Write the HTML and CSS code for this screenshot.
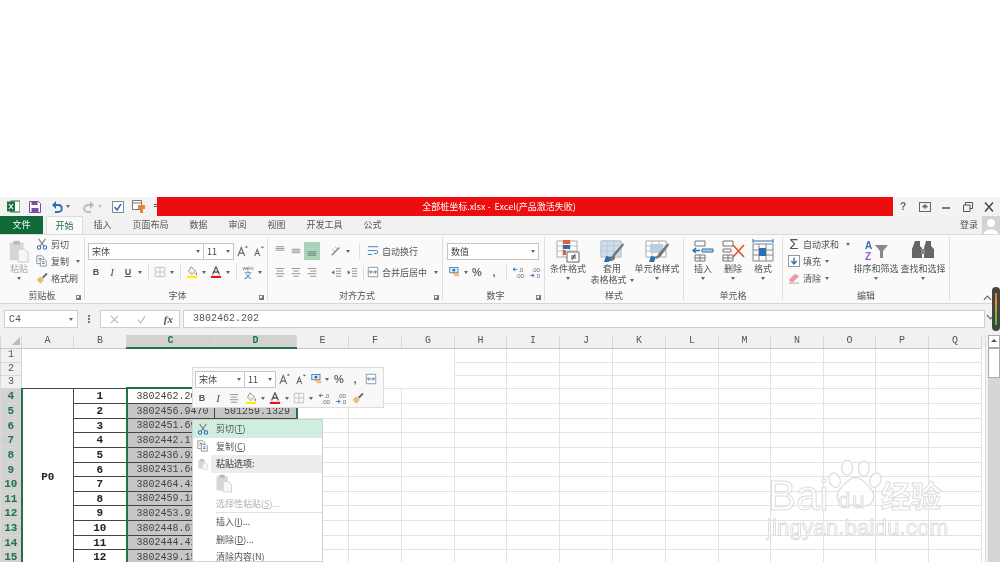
FILE: index.html
```html
<!DOCTYPE html>
<html lang="zh-CN">

<head>
    <meta charset="UTF-8">
    <title>全部桩坐标.xlsx - Excel</title>
    <link rel="stylesheet" href="styles.css">
</head>

<body>
    <svg class="sprite" xmlns="http://www.w3.org/2000/svg">
        <symbol id="fill" viewBox="0 0 14 14"><path d="M6 1l5 5-4 4-4-4z" fill="#fff" stroke="#777"/><path d="M3.500 6.500h7l-3.500 3.500z" fill="#e8d9a8"/><path d="M12 7c1 2 1.500 3 0 3.500-1.500-.5-1-1.500 0-3.500z" fill="#777"/><rect x="1" y="11.500" width="12" height="2.500" fill="#ffee00"/></symbol>
        <symbol id="fontcolor" viewBox="0 0 14 14"><path d="M3 10L7 1l4 9M4.500 7h5" fill="none" stroke="#555" stroke-width="1.500"/><rect x="1" y="11.500" width="12" height="2.500" fill="#e81010"/></symbol>
        <symbol id="grow" viewBox="0 0 14 14"><path d="M1 13L5 3l4 10M2.700 9.500h4.600" fill="none" stroke="#666" stroke-width="1.300"/><path d="M9 3l2-2 2 2z" fill="#2a6fb0"/></symbol>
        <symbol id="shrink" viewBox="0 0 14 14"><path d="M2 13l3-8 3 8M3.200 10h3.600" fill="none" stroke="#666" stroke-width="1.200"/><path d="M9 2l2 2 2-2z" fill="#2a6fb0"/></symbol>
        <symbol id="border" viewBox="0 0 14 14"><path d="M1.500 1.500h11v11h-11zM7 1.500v11M1.500 7h11" fill="none" stroke="#bbb"/></symbol>
        <symbol id="money" viewBox="0 0 16 14"><rect x="1" y="1" width="11" height="7" fill="#dcebf6" stroke="#2a6fb0"/><circle cx="6.500" cy="4.500" r="1.800" fill="#2a6fb0"/><rect x="5" y="8" width="8" height="2" fill="#f0b35a"/><rect x="7" y="10.500" width="7" height="2" fill="#f0b35a"/></symbol>
        <symbol id="decup" viewBox="0 0 14 14"><path d="M0 4h5M2.500 2L0 4l2.500 2" fill="none" stroke="#2a6fb0"/><text x="6" y="6.500" font-size="7" font-family="Liberation Sans" fill="#666">.0</text><text x="3" y="13.500" font-size="7" font-family="Liberation Sans" fill="#666">.00</text></symbol>
        <symbol id="decdown" viewBox="0 0 14 14"><text x="3" y="6.500" font-size="7" font-family="Liberation Sans" fill="#666">.00</text><text x="7" y="13.500" font-size="7" font-family="Liberation Sans" fill="#666">.0</text><path d="M1 11h5M3.500 9L6 11l-2.500 2" fill="none" stroke="#2a6fb0"/></symbol>
        <symbol id="brush" viewBox="0 0 14 14"><path d="M1 9l4-4 4 4-3 4c-2 0-4-2-5-4z" fill="#e3bd78"/><path d="M7 6l5-5 1.500 1.500-5 5z" fill="#666"/></symbol>
        <symbol id="cut" viewBox="0 0 14 14"><path d="M3 1l6 8M11 1L5 9" stroke="#777" stroke-width="1.200" fill="none"/><circle cx="3.500" cy="11" r="2" fill="none" stroke="#2a6fb0" stroke-width="1.200"/><circle cx="10.500" cy="11" r="2" fill="none" stroke="#2a6fb0" stroke-width="1.200"/></symbol>
        <symbol id="copy" viewBox="0 0 14 14"><path d="M1 1h6l2 2v7H1z" fill="#fff" stroke="#888"/><path d="M5 5h5l2 2v6H5z" fill="#fff" stroke="#888"/><path d="M3 4h3M3 6h1M7 8h3M7 10h3" stroke="#2a6fb0"/></symbol>
        <symbol id="paste" viewBox="0 0 24 26"><path d="M2 4h15v19H2z" fill="#d9d5d5"/><path d="M6 2h7v4H6z" fill="#bdb8b8"/><path d="M11 11h7l4 4v10H11z" fill="#f6f6f6" stroke="#c9c9c9"/></symbol>
        <symbol id="lines" viewBox="0 0 14 14"><path d="M2 3h10M3.500 6h7M2 9h10M3.500 12h7" stroke="#888"/></symbol>
        <symbol id="table" viewBox="0 0 24 22"><path d="M1 1h20v16H1z" fill="#fff" stroke="#aaa"/><path d="M1 6h20M1 11h20M7 1v16M14 1v16" stroke="#bbb"/></symbol>
    </svg>

    <div class="app">
        <div class="blank"></div>

        <div class="titlebar">
            <div class="qat">
                <svg class="qat-xl" viewBox="0 0 13 13"><rect x="4" y="1" width="9" height="11" fill="#fff" stroke="#1e7145"/><path d="M0 1.500h8v10H0z" fill="#1e7145"/><path d="M2 4l4 5M6 4L2 9" stroke="#fff" stroke-width="1.100"/></svg>
                <svg class="qat-save" viewBox="0 0 12 12"><path d="M.5.500h9l2 2v9H.5z" fill="#fff" stroke="#7b4fa0"/><path d="M2.500.500h6v3.500h-6zM2.500 7h7v4.500h-7z" fill="#7b4fa0"/></svg>
                <svg class="qat-undo" viewBox="0 0 12 12"><path d="M2 4h5c5 0 5 7 0 7H4" fill="none" stroke="#2a6fb0" stroke-width="1.800"/><path d="M5 0L1 4l4 4z" fill="#2a6fb0"/></svg>
                <span class="caret qat-caret1"></span>
                <svg class="qat-redo" viewBox="0 0 12 12"><path d="M10 4H5c-5 0-5 7 0 7h3" fill="none" stroke="#bbb" stroke-width="1.800"/><path d="M7 0l4 4-4 4z" fill="#bbb"/></svg>
                <span class="caret caret-light qat-caret2"></span>
                <svg class="qat-check" viewBox="0 0 12 12"><rect x=".5" y=".5" width="11" height="11" fill="#fff" stroke="#888"/><path d="M2.500 6l2.500 3 4-6" fill="none" stroke="#2a6fb0" stroke-width="1.500"/></svg>
                <svg class="qat-view" viewBox="0 0 13 13"><path d="M.5.500h9v9h-9z" fill="#fff" stroke="#777"/><path d="M.5 3h9" stroke="#777"/><path d="M6 5h7v4h-2v4H8V9H6z" fill="#e8862c"/></svg>
                <span class="qat-more"></span>
            </div>
            <div class="title">全部桩坐标.xlsx -&nbsp; Excel(产品激活失败)</div>
            <div class="winctl">
                <span class="help">?</span>
                <svg viewBox="0 0 12 10"><rect x=".5" y=".5" width="11" height="9" fill="none" stroke="#666"/><path d="M3.500 5h5L6 2.500zM6 5v2" fill="#666" stroke="#666"/></svg>
                <svg viewBox="0 0 12 10"><path d="M2 6h8" stroke="#555" stroke-width="1.500"/></svg>
                <svg viewBox="0 0 12 10"><path d="M3.500 3V.5h7v6H8" fill="none" stroke="#555"/><path d="M1.500 3h6.500v6.500h-6.500z" fill="none" stroke="#555"/></svg>
                <svg viewBox="0 0 12 10"><path d="M2 .5l8 9M10 .5l-8 9" stroke="#444" stroke-width="1.400"/></svg>
            </div>
        </div>

        <div class="tabs">
            <div class="tab tab-file">文件</div>
            <div class="tab tab-active">开始</div>
            <div class="tab">插入</div>
            <div class="tab">页面布局</div>
            <div class="tab">数据</div>
            <div class="tab">审阅</div>
            <div class="tab">视图</div>
            <div class="tab">开发工具</div>
            <div class="tab">公式</div>
            <div class="login">登录</div>
            <svg class="avatar" viewBox="0 0 18 18"><rect width="18" height="18" fill="#d4d4d4"/><circle cx="9" cy="7" r="4" fill="#fff"/><path d="M2 18c0-6 14-6 14 0z" fill="#fff"/></svg>
        </div>

        <div class="ribbon">
            <div class="group g-clip">
                <div class="group-body">
                    <div class="big big-paste">
                        <svg class="big-icon" viewBox="0 0 24 26"><use href="#paste"/></svg>
                        <span class="muted">粘贴</span>
                        <span class="caret"></span>
                    </div>
                    <div class="stack">
                        <div class="small"><svg class="ic"><use href="#cut"/></svg>剪切</div>
                        <div class="small"><svg class="ic"><use href="#copy"/></svg>复制<span class="caret caret-gap"></span></div>
                        <div class="small"><svg class="ic"><use href="#brush"/></svg>格式刷</div>
                    </div>
                </div>
                <div class="group-label">剪贴板<i class="launcher"></i></div>
            </div>

            <div class="group g-font">
                <div class="group-body rows">
                    <div class="row">
                        <div class="combo combo-font">宋体<span class="caret"></span></div>
                        <div class="combo combo-size">11<span class="caret"></span></div>
                        <svg class="ic grow"><use href="#grow"/></svg>
                        <svg class="ic"><use href="#shrink"/></svg>
                    </div>
                    <div class="row">
                        <span class="tool strong">B</span>
                        <span class="tool italic">I</span>
                        <span class="tool under">U</span>
                        <span class="tool-caret"><span class="caret"></span></span>
                        <span class="vsep"></span>
                        <span class="tool"><svg class="ic"><use href="#border"/></svg></span>
                        <span class="tool-caret"><span class="caret"></span></span>
                        <span class="vsep"></span>
                        <span class="tool"><svg class="ic"><use href="#fill"/></svg></span>
                        <span class="tool-caret"><span class="caret"></span></span>
                        <span class="tool"><svg class="ic"><use href="#fontcolor"/></svg></span>
                        <span class="tool-caret"><span class="caret"></span></span>
                        <span class="vsep"></span>
                        <span class="tool wen"><small>wén</small>文</span>
                        <span class="tool-caret"><span class="caret"></span></span>
                    </div>
                </div>
                <div class="group-label">字体<i class="launcher"></i></div>
            </div>

            <div class="group g-align">
                <div class="group-body rows">
                    <div class="row">
                        <span class="tool"><svg class="ic" viewBox="0 0 14 14"><path d="M2 2h10M2 4h10M2 6h10" stroke="#888"/></svg></span>
                        <span class="tool"><svg class="ic" viewBox="0 0 14 14"><path d="M2 5h10M2 7h10M2 9h10" stroke="#888"/></svg></span>
                        <span class="tool tool-on"><svg class="ic" viewBox="0 0 14 14"><path d="M2 8h10M2 10h10M2 12h10" stroke="#777"/></svg></span>
                        <span class="vgap"></span>
                        <span class="tool"><svg class="ic" viewBox="0 0 14 14"><path d="M2 12L11 3" stroke="#888" stroke-width="1.500"/><path d="M3 5l3 3M6 2l3 3" stroke="#d0882c"/></svg></span>
                        <span class="tool-caret"><span class="caret"></span></span>
                        <span class="vsep vsep-wide"></span>
                        <div class="small"><svg class="ic" viewBox="0 0 14 14"><path d="M1 2h12M1 11h5M1 6.500h10c2 0 2 3.500 0 3.500H8" fill="none" stroke="#2a6fb0"/></svg>自动换行</div>
                    </div>
                    <div class="row">
                        <span class="tool"><svg class="ic"><use href="#lines"/></svg></span>
                        <span class="tool"><svg class="ic" viewBox="0 0 14 14"><path d="M2 3h10M4 6h6M2 9h10M4 12h6" stroke="#888"/></svg></span>
                        <span class="tool"><svg class="ic" viewBox="0 0 14 14"><path d="M2 3h10M5 6h7M2 9h10M5 12h7" stroke="#888"/></svg></span>
                        <span class="vgap"></span>
                        <span class="tool"><svg class="ic" viewBox="0 0 14 14"><path d="M7 3h6M7 6h6M7 9h6M7 12h6" stroke="#888"/><path d="M5 5L2 7.500 5 10z" fill="#2a6fb0"/></svg></span>
                        <span class="tool"><svg class="ic" viewBox="0 0 14 14"><path d="M7 3h6M7 6h6M7 9h6M7 12h6" stroke="#888"/><path d="M2 5l3 2.500L2 10z" fill="#2a6fb0"/></svg></span>
                        <span class="vsep vsep-tight"></span>
                        <div class="small"><svg class="ic" viewBox="0 0 14 14"><path d="M1.500 1.500h11v11h-11z" fill="#fff" stroke="#888"/><path d="M3 7h8M5 5L3 7l2 2M9 5l2 2-2 2" fill="none" stroke="#2a6fb0"/></svg>合并后居中<span class="caret caret-gap"></span></div>
                    </div>
                </div>
                <div class="group-label">对齐方式<i class="launcher"></i></div>
            </div>

            <div class="group g-num">
                <div class="group-body rows">
                    <div class="row">
                        <div class="combo combo-num">数值<span class="caret"></span></div>
                    </div>
                    <div class="row">
                        <span class="tool"><svg class="ic" viewBox="0 0 16 14"><use href="#money"/></svg></span>
                        <span class="tool-caret tool-caret-thin"><span class="caret"></span></span>
                        <span class="tool sym">%</span>
                        <span class="tool sym comma">,</span>
                        <span class="vsep vsep-num"></span>
                        <span class="tool"><svg class="ic"><use href="#decup"/></svg></span>
                        <span class="tool"><svg class="ic"><use href="#decdown"/></svg></span>
                    </div>
                </div>
                <div class="group-label">数字<i class="launcher"></i></div>
            </div>

            <div class="group g-style">
                <div class="group-body">
                    <div class="big big-cond">
                        <svg class="big-icon" viewBox="0 0 24 24"><use href="#table"/><path d="M7 1h7v4H7z" fill="#d9663a"/><path d="M7 6h7v4H7z" fill="#2a6fb0"/><path d="M7 11h3v5H7z" fill="#d9663a"/><path d="M11 13h12v10H11z" fill="#fff" stroke="#666"/><path d="M15 17h5M15 19h5M19 15l-3 6" stroke="#444"/></svg>
                        <span>条件格式</span>
                        <span class="caret"></span>
                    </div>
                    <div class="big big-table">
                        <svg class="big-icon" viewBox="0 0 24 24"><use href="#table"/><path d="M1 1h20v16H1z" fill="#b9cde4" opacity=".7"/><path d="M23 4l-9 10-2 3-4 2-2 3 6 0 3-2 0-3 9-11z" fill="#777"/><path d="M6 17l5 1-2 5H4z" fill="#2a6fb0"/></svg>
                        <span>套用</span>
                        <span>表格格式<span class="caret caret-inline"></span></span>
                    </div>
                    <div class="big big-cell">
                        <svg class="big-icon" viewBox="0 0 24 24"><use href="#table"/><path d="M5 5h13v9H5z" fill="#b9cde4"/><path d="M23 4l-9 10-2 3-2 1 2 2 4-3 8-11z" fill="#777"/><path d="M6 17l5 1-2 5H4z" fill="#2a6fb0"/></svg>
                        <span>单元格样式</span>
                        <span class="caret"></span>
                    </div>
                </div>
                <div class="group-label">样式</div>
            </div>

            <div class="group g-cells">
                <div class="group-body">
                    <div class="big big-cellbtn">
                        <svg class="big-icon" viewBox="0 0 24 24"><path d="M4 2h10v5H4zM4 16h10v6H4zM9 16v6M4 19h10" fill="none" stroke="#777"/><path d="M11 10h11v3H11z" fill="#b9cde4" stroke="#2a6fb0"/><path d="M2 11.500h7M5 9l-3 2.500L5 14" fill="none" stroke="#2a6fb0" stroke-width="1.300"/></svg>
                        <span>插入</span>
                        <span class="caret"></span>
                    </div>
                    <div class="big big-cellbtn">
                        <svg class="big-icon" viewBox="0 0 24 24"><path d="M2 2h10v5H2zM2 16h10v6H2zM7 16v6M2 19h10M2 10h8v3H2z" fill="none" stroke="#777"/><path d="M12 6l11 12M23 6L12 18" stroke="#e0582c" stroke-width="1.700"/></svg>
                        <span>删除</span>
                        <span class="caret"></span>
                    </div>
                    <div class="big big-cellbtn">
                        <svg class="big-icon" viewBox="0 0 24 24"><path d="M2 5h20v17H2zM2 11h20M2 16h20M8 5v17M15 5v17" fill="none" stroke="#888"/><path d="M8 9h7v8H8z" fill="#2a6fb0"/><path d="M2 2h20M2 0v4M22 0v4" fill="none" stroke="#2a6fb0"/></svg>
                        <span>格式</span>
                        <span class="caret"></span>
                    </div>
                </div>
                <div class="group-label">单元格</div>
            </div>

            <div class="group g-edit">
                <div class="group-body">
                    <div class="stack stack-edit">
                        <div class="small"><span class="sigma">Σ</span>自动求和<span class="caret caret-gap"></span></div>
                        <div class="small"><svg class="ic" viewBox="0 0 14 14"><rect x=".5" y=".5" width="13" height="13" fill="#fff" stroke="#888"/><path d="M7 3v7M4 7l3 3.500L10 7" fill="none" stroke="#2a6fb0" stroke-width="1.500"/></svg>填充<span class="caret caret-near"></span></div>
                        <div class="small"><svg class="ic" viewBox="0 0 14 14"><path d="M1 9l7-7 5 3-7 7H3z" fill="#ef9aa8"/><path d="M1 13h12" stroke="#999"/></svg>清除<span class="caret caret-near"></span></div>
                    </div>
                    <div class="big big-sort">
                        <svg class="big-icon" viewBox="0 0 24 24"><path d="M11 6h13l-5 6v7h-3v-7z" fill="#888"/><text class="sort-a" x="1" y="10">A</text><text class="sort-z" x="1" y="21">Z</text></svg>
                        <span>排序和筛选</span>
                        <span class="caret"></span>
                    </div>
                    <div class="big big-find">
                        <svg class="big-icon" viewBox="0 0 24 24"><path d="M4 2h5v5l2 2v10H1V10zM15 2h5v5l3 3v9H13V9z" fill="#666"/><rect x="10" y="10" width="4" height="5" fill="#888"/></svg>
                        <span>查找和选择</span>
                        <span class="caret"></span>
                    </div>
                </div>
                <div class="group-label">编辑</div>
            </div>
            <svg class="collapse" viewBox="0 0 10 6"><path d="M1 5l4-4 4 4" fill="none" stroke="#666" stroke-width="1.300"/></svg>
        </div>

        <div class="formula">
            <div class="namebox">C4<span class="caret"></span></div>
            <div class="dots"></div>
            <div class="fx-btns">
                <svg viewBox="0 0 10 10"><path d="M1 1l8 8M9 1L1 9" stroke="#bbb" stroke-width="1.300"/></svg>
                <svg viewBox="0 0 10 10"><path d="M1 5l3 4 5-8" fill="none" stroke="#bbb" stroke-width="1.300"/></svg>
                <span class="fx">fx</span>
            </div>
            <div class="fx-input">3802462.202</div>
            <svg class="expand" viewBox="0 0 10 6"><path d="M1 1l4 4 4-4" fill="none" stroke="#666" stroke-width="1.300"/></svg>
        </div>
        <div class="handle"></div>

        <div class="sheet">
            <table class="grid">
                <colgroup>
                    <col class="c-h"><col class="c-52"><col class="c-53"><col class="c-c"><col class="c-d"><col class="c-52"><col class="c-53"><col class="c-53"><col class="c-52"><col class="c-53"><col class="c-53"><col class="c-53"><col class="c-53"><col class="c-52"><col class="c-53"><col class="c-52"><col class="c-53"><col class="c-53">
                </colgroup>
                <tr class="head">
                    <th class="corner"><i></i></th><th>A</th><th>B</th><th class="on">C</th><th class="on">D</th><th>E</th><th>F</th><th>G</th><th>H</th><th>I</th><th>J</th><th>K</th><th>L</th><th>M</th><th>N</th><th>O</th><th>P</th><th>Q</th>
                </tr>
                <tr class="r14"><th>1</th><td class="merged m-left" colspan="2" rowspan="3"></td><td class="merged m-mid" colspan="2" rowspan="3"></td><td class="merged m-right" colspan="3" rowspan="3"></td><td></td><td></td><td></td><td></td><td></td><td></td><td></td><td></td><td></td><td></td></tr>
                <tr class="r13"><th>2</th><td></td><td></td><td></td><td></td><td></td><td></td><td></td><td></td><td></td><td></td></tr>
                <tr class="r13"><th>3</th><td></td><td></td><td></td><td></td><td></td><td></td><td></td><td></td><td></td><td></td></tr>
                <tr class="r15"><th class="on">4</th><td class="p0" rowspan="12">P0</td><td class="idx">1</td><td class="val first active">3802462.202</td><td class="val2 first active"></td><td></td><td></td><td></td><td></td><td></td><td></td><td></td><td></td><td></td><td></td><td></td><td></td><td></td></tr>
                <tr class="r15"><th class="on">5</th><td class="idx">2</td><td class="val">3802456.9470</td><td class="val2">501259.1329</td><td></td><td></td><td></td><td></td><td></td><td></td><td></td><td></td><td></td><td></td><td></td><td></td><td></td></tr>
                <tr class="r14"><th class="on">6</th><td class="idx">3</td><td class="val">3802451.69</td><td class="val2"></td><td></td><td></td><td></td><td></td><td></td><td></td><td></td><td></td><td></td><td></td><td></td><td></td><td></td></tr>
                <tr class="r15"><th class="on">7</th><td class="idx">4</td><td class="val">3802442.17</td><td class="val2"></td><td></td><td></td><td></td><td></td><td></td><td></td><td></td><td></td><td></td><td></td><td></td><td></td><td></td></tr>
                <tr class="r15"><th class="on">8</th><td class="idx">5</td><td class="val">3802436.92</td><td class="val2"></td><td></td><td></td><td></td><td></td><td></td><td></td><td></td><td></td><td></td><td></td><td></td><td></td><td></td></tr>
                <tr class="r14"><th class="on">9</th><td class="idx">6</td><td class="val">3802431.66</td><td class="val2"></td><td></td><td></td><td></td><td></td><td></td><td></td><td></td><td></td><td></td><td></td><td></td><td></td><td></td></tr>
                <tr class="r15"><th class="on">10</th><td class="idx">7</td><td class="val">3802464.43</td><td class="val2"></td><td></td><td></td><td></td><td></td><td></td><td></td><td></td><td></td><td></td><td></td><td></td><td></td><td></td></tr>
                <tr class="r14"><th class="on">11</th><td class="idx">8</td><td class="val">3802459.18</td><td class="val2"></td><td></td><td></td><td></td><td></td><td></td><td></td><td></td><td></td><td></td><td></td><td></td><td></td><td></td></tr>
                <tr class="r15"><th class="on">12</th><td class="idx">9</td><td class="val">3802453.92</td><td class="val2"></td><td></td><td></td><td></td><td></td><td></td><td></td><td></td><td></td><td></td><td></td><td></td><td></td><td></td></tr>
                <tr class="r15"><th class="on">13</th><td class="idx">10</td><td class="val">3802448.67</td><td class="val2"></td><td></td><td></td><td></td><td></td><td></td><td></td><td></td><td></td><td></td><td></td><td></td><td></td><td></td></tr>
                <tr class="r14"><th class="on">14</th><td class="idx">11</td><td class="val">3802444.41</td><td class="val2"></td><td></td><td></td><td></td><td></td><td></td><td></td><td></td><td></td><td></td><td></td><td></td><td></td><td></td></tr>
                <tr class="r15"><th class="on">15</th><td class="idx">12</td><td class="val">3802439.15</td><td class="val2"></td><td></td><td></td><td></td><td></td><td></td><td></td><td></td><td></td><td></td><td></td><td></td><td></td><td></td></tr>
            </table>
            <div class="sheet-end"></div>
            <div class="vscroll">
                <div class="vscroll-btn"></div>
                <div class="vscroll-thumb"></div>
            </div>

            <div class="minibar">
                <div class="row">
                    <div class="combo mini-font">宋体<span class="caret"></span></div>
                    <div class="combo mini-size">11<span class="caret"></span></div>
                    <svg class="ic mini-grow"><use href="#grow"/></svg>
                    <svg class="ic mini-shrink"><use href="#shrink"/></svg>
                    <svg class="ic mini-money" viewBox="0 0 16 14"><use href="#money"/></svg>
                    <span class="tool-caret"><span class="caret"></span></span>
                    <span class="tool sym">%</span>
                    <span class="tool sym">,</span>
                    <svg class="ic mini-merge" viewBox="0 0 14 14"><path d="M1.500 1.500h11v11h-11z" fill="#fff" stroke="#888"/><path d="M3 7h8M5 5L3 7l2 2M9 5l2 2-2 2" fill="none" stroke="#2a6fb0"/></svg>
                </div>
                <div class="row mini-row2">
                    <span class="tool strong">B</span>
                    <span class="tool italic">I</span>
                    <span class="tool"><svg class="ic"><use href="#lines"/></svg></span>
                    <span class="tool mini-gap1"><svg class="ic"><use href="#fill"/></svg></span>
                    <span class="tool-caret"><span class="caret"></span></span>
                    <span class="tool"><svg class="ic"><use href="#fontcolor"/></svg></span>
                    <span class="tool-caret"><span class="caret"></span></span>
                    <span class="tool"><svg class="ic"><use href="#border"/></svg></span>
                    <span class="tool-caret"><span class="caret"></span></span>
                    <span class="tool mini-gap2"><svg class="ic"><use href="#decup"/></svg></span>
                    <span class="tool"><svg class="ic"><use href="#decdown"/></svg></span>
                    <span class="tool mini-gap1"><svg class="ic"><use href="#brush"/></svg></span>
                </div>
            </div>

            <div class="menu">
                <div class="item item-hover"><svg class="ic"><use href="#cut"/></svg><span>剪切(<u>T</u>)</span></div>
                <div class="item"><svg class="ic"><use href="#copy"/></svg><span>复制(<u>C</u>)</span></div>
                <div class="item item-head"><svg class="ic" viewBox="0 0 24 26"><use href="#paste"/></svg><span>粘贴选项:</span></div>
                <div class="paste-row"><svg class="paste-big" viewBox="0 0 24 26"><use href="#paste"/></svg></div>
                <div class="item item-off"><i></i><span>选择性粘贴(<u>S</u>)...</span></div>
                <div class="menu-sep"></div>
                <div class="item"><i></i><span>插入(<u>I</u>)...</span></div>
                <div class="item"><i></i><span>删除(<u>D</u>)...</span></div>
                <div class="item"><i></i><span>清除内容(<u>N</u>)</span></div>
            </div>

            <div class="watermark">
                <span class="wm-bai">Bai</span>
                <svg class="wm-paw" viewBox="0 0 66 62"><g fill="#fff" fill-opacity=".7" stroke="#ddd" stroke-width="1.500"><ellipse cx="23" cy="12" rx="6.500" ry="9"/><ellipse cx="43" cy="13" rx="6.500" ry="9"/><ellipse cx="8" cy="27" rx="6.500" ry="9" transform="rotate(-20 8 27)"/><ellipse cx="57" cy="27" rx="6.500" ry="9" transform="rotate(20 57 27)"/><path d="M33 24c8 0 12 7 18 13 7 7 4 22-9 21-4 0-6-2-9-2s-6 2-10 2C10 58 8 44 15 37c6-6 10-13 18-13z"/></g></svg>
                <span class="wm-du">du</span>
                <span class="wm-jy">经验</span>
                <span class="wm-url">jingyan.baidu.com</span>
            </div>
        </div>
    </div>
</body>

</html>
```

FILE: styles.css
```css
html, body {
    margin: 0;
    height: 562px;
    overflow: hidden;
    background: #fff;
}

body {
    font-family: "Noto Sans CJK SC", "Liberation Sans", sans-serif;
    font-size: 9px;
    color: #555;
}

.sprite {
    display: none;
}

.app {
    width: 1000px;
    height: 562px;
    overflow: hidden;
    filter: blur(0.4px);
}

.blank {
    height: 197px;
}

svg {
    display: block;
    flex: none;
}

.ic {
    width: 12px;
    height: 12px;
}

.caret {
    display: inline-block;
    flex: none;
    width: 0;
    height: 0;
    border: 2px solid transparent;
    border-top: 3px solid #666;
    border-bottom: 0;
}

.caret-light {
    border-top-color: #c4c4c4;
}

/* title bar */
.titlebar {
    display: flex;
    height: 19px;
    background: #f3f3f3;
}

.qat {
    position: relative;
    width: 157px;
    display: flex;
    align-items: center;
}

.qat-xl { width: 13px; height: 13px; margin-left: 7px; }
.qat-save { width: 12px; height: 12px; margin-left: 9px; }
.qat-undo { width: 12px; height: 12px; margin-left: 10px; }
.qat-caret1 { margin-left: 3px; }
.qat-redo { width: 12px; height: 12px; margin-left: 13px; }
.qat-caret2 { margin-left: 3px; }
.qat-check { width: 12px; height: 12px; margin-left: 10px; }
.qat-view { width: 13px; height: 13px; margin-left: 8px; }

.qat-more {
    margin-left: 9px;
    width: 4px;
    height: 5px;
    border-top: 1px solid #555;
    background: linear-gradient(#0000 1px, #555 1px, #555 2px, #0000 2px);
}

.title {
    width: 736px;
    background: #ec0e0e;
    color: #fff;
    text-align: center;
    line-height: 19px;
    font-size: 9px;
    padding-right: 52px;
    box-sizing: border-box;
}

.winctl {
    flex: 1;
    display: flex;
    align-items: center;
    justify-content: space-between;
    padding: 0 5px 0 4px;
}

.winctl svg {
    width: 12px;
    height: 10px;
}

.help {
    font-family: "Liberation Sans", sans-serif;
    font-weight: bold;
    font-size: 10px;
    color: #666;
    width: 12px;
    text-align: center;
}

/* tabs */
.tabs {
    display: flex;
    height: 18px;
    background: #f1f1f1;
    line-height: 18px;
}

.tab {
    padding: 0 10.500px;
}

.tab-file {
    width: 43px;
    box-sizing: border-box;
    padding: 0;
    text-align: center;
    background: #0f6a38;
    color: #fff;
    margin-right: 3px;
}

.tab-active {
    width: 37px;
    box-sizing: border-box;
    padding: 0;
    text-align: center;
    color: #217346;
    background: #fafafa;
    border: 1px solid #dcdcdc;
    border-bottom: 0;
    line-height: 17px;
}

.login {
    margin-left: auto;
    margin-right: 4px;
}

.avatar {
    width: 18px;
    height: 18px;
}

/* ribbon */
.ribbon {
    position: relative;
    display: flex;
    height: 68px;
    background: #fafafa;
    border-top: 1px solid #dcdcdc;
    border-bottom: 1px solid #d6d6d6;
    box-sizing: content-box;
}

.group {
    display: flex;
    flex-direction: column;
    box-sizing: border-box;
    height: 63px;
    margin-top: 2px;
    border-right: 1px solid #dedede;
}

.g-clip { width: 85px; }
.g-font { width: 183px; padding-left: 3px; }
.g-align { width: 175px; padding-left: 4px; }
.g-num { width: 102px; padding-left: 4px; }
.g-style { width: 139px; }
.g-cells { width: 99px; }
.g-edit { width: 167px; }

.group-body {
    flex: 1;
    display: flex;
    min-height: 0;
}

.group-label {
    position: relative;
    height: 13px;
    margin-bottom: -2px;
    line-height: 13px;
    text-align: center;
}

.launcher {
    position: absolute;
    right: 3px;
    bottom: 2px;
    width: 4px;
    height: 4px;
    border-left: 1px solid #888;
    border-top: 1px solid #888;
    box-shadow: inset -2px -2px 0 #777;
}

.rows {
    flex-direction: column;
    padding-top: 5px;
    gap: 3px;
}

.row {
    display: flex;
    align-items: center;
    height: 18px;
}

.big {
    display: flex;
    flex-direction: column;
    align-items: center;
    line-height: 11px;
    white-space: nowrap;
    padding-top: 2px;
}

.big-icon {
    width: 24px;
    height: 24px;
}

.big .caret {
    margin-top: 3px;
}

.big-paste { width: 24px; margin: 0 0 0 7px; }
.big-cond { width: 44px; margin-left: 1px; }
.big-table { width: 44px; margin-left: 0; }
.big-cell { width: 46px; }
.big-cellbtn { width: 30px; }
.g-cells .big-cellbtn:first-child { margin-left: 4px; }
.big-sort { width: 46px; margin-left: 1px; }
.big-find { width: 46px; margin-left: 1px; }

.muted {
    color: #aaa;
}

.caret-inline {
    margin: 0 0 1px 3px !important;
}

.stack {
    display: flex;
    flex-direction: column;
    margin-left: 5px;
    padding-top: 1px;
    gap: 5px;
}

.stack-edit {
    width: 64px;
}

.small {
    display: flex;
    align-items: center;
    height: 12px;
    gap: 3px;
    white-space: nowrap;
}

.caret-gap { margin-left: 4px; }
.caret-near { margin-left: 1px; }

.sigma {
    width: 12px;
    font-family: "Liberation Sans", sans-serif;
    font-size: 15px;
    line-height: 12px;
    color: #555;
    text-align: center;
}

.sort-a {
    font: bold 10px "Liberation Sans", sans-serif;
    fill: #2a6fb0;
}

.sort-z {
    font: bold 10px "Liberation Sans", sans-serif;
    fill: #9a5cc6;
}

.combo {
    position: relative;
    display: flex;
    align-items: center;
    justify-content: space-between;
    box-sizing: border-box;
    height: 17px;
    padding: 0 3px;
    background: #fff;
    border: 1px solid #c6c6c6;
    color: #444;
}

.combo-font { width: 116px; }
.combo-size { width: 30px; margin-right: 3px; border-left: 0; }
.combo-num { width: 92px; }

.grow { margin-right: 4px; }

.tool {
    display: flex;
    align-items: center;
    justify-content: center;
    flex: none;
    width: 16px;
    height: 18px;
    font-family: "Liberation Serif", serif;
    font-size: 11px;
}

.tool-on {
    background: #a9d4b8;
}

.tool-caret {
    display: flex;
    align-items: center;
    justify-content: center;
    flex: none;
    width: 8px;
}

.tool-caret-thin { width: 6px; }

.strong { font-weight: bold; font-family: "Liberation Sans", sans-serif; font-size: 9px; }
.italic { font-style: italic; }
.under { text-decoration: underline; font-family: "Liberation Sans", sans-serif; font-size: 9px; font-weight: bold; }
.sym { font-family: "Liberation Sans", sans-serif; font-size: 11px; font-weight: bold; color: #666; }

.wen {
    flex-direction: column;
    font-family: "Noto Sans CJK SC", sans-serif;
    font-size: 8px;
    line-height: 8px;
    color: #2a6fb0;
}

.wen small {
    font-family: "Liberation Sans", sans-serif;
    font-size: 6px;
    line-height: 6px;
    color: #666;
}

.vsep {
    flex: none;
    width: 8px;
    height: 15px;
    background: linear-gradient(#dedede, #dedede) center / 1px 100% no-repeat;
}

.vgap { flex: none; width: 8px; }
.vsep-wide { width: 14px; margin-right: 1px; }
.vsep-tight { width: 7px; }
.vsep-num { width: 8px; margin-right: 1px; }
.comma { margin-left: 1px; }

.collapse {
    position: absolute;
    left: 983px;
    top: 60px;
    width: 9px;
    height: 6px;
}

/* formula bar */
.formula {
    position: relative;
    display: flex;
    align-items: stretch;
    height: 18px;
    padding: 6px 15px 7px 4px;
    background: #f1f1f1;
}

.namebox {
    display: flex;
    align-items: center;
    justify-content: space-between;
    box-sizing: border-box;
    width: 74px;
    padding: 0 4px;
    background: #fff;
    border: 1px solid #cfcfcf;
    font-family: "Liberation Mono", monospace;
    font-size: 10px;
}

.dots {
    width: 2px;
    height: 8px;
    margin: 5px 10px 0 10px;
    background: repeating-linear-gradient(#777 0 2px, #0000 2px 3px);
}

.fx-btns {
    display: flex;
    align-items: center;
    justify-content: space-between;
    box-sizing: border-box;
    width: 80px;
    padding: 0 6px 0 9px;
    background: #fff;
    border: 1px solid #cfcfcf;
    margin-right: 3px;
}

.fx-btns svg {
    width: 9px;
    height: 9px;
}

.fx {
    font-family: "Liberation Serif", serif;
    font-style: italic;
    font-size: 11px;
    font-weight: bold;
    color: #555;
}

.fx-input {
    flex: 1;
    box-sizing: border-box;
    padding-left: 9px;
    line-height: 16px;
    background: #fff;
    border: 1px solid #cfcfcf;
    font-family: "Liberation Mono", monospace;
    font-size: 10px;
}

.expand {
    position: absolute;
    left: 986px;
    top: 6px;
    width: 9px;
    height: 6px;
    margin-top: 4px;
}

.handle {
    position: absolute;
    left: 992px;
    top: 287px;
    width: 8px;
    height: 44px;
    box-sizing: border-box;
    border-radius: 4px;
    background: linear-gradient(#d97b22, #d9a022 35%, #3fc23f) center / 2px 32px no-repeat #444;
}

/* sheet */
.sheet {
    position: relative;
    display: flex;
    height: 227px;
    background: #f1f1f1;
}

.grid {
    table-layout: fixed;
    width: 981px;
    height: 227px;
    border-collapse: collapse;
    background: #fff;
    font-family: "Liberation Mono", monospace;
    font-size: 10px;
}

.c-h { width: 21px; }
.c-52 { width: 52px; }
.c-53 { width: 53px; }
.c-c { width: 88px; }
.c-d { width: 82px; }

.grid td, .grid th {
    padding: 0;
    overflow: hidden;
    white-space: nowrap;
    border: 1px solid #e3e3e3;
}

.grid th {
    background: #f1f1f1;
    font-weight: normal;
    color: #555;
    border-color: #d8d8d8;
    line-height: 10px;
}

.head { height: 13px; }
.r13 { height: 13px; }
.r14 { height: 14px; }
.r15 { height: 15px; }

.grid th.on {
    padding-top: 1px;
    background: #d2d2d2;
    color: #217346;
    font-size: 11px;
    font-weight: bold;
}

.head th {
    border-top: 0;
    border-bottom: 1px solid #c6c6c6;
}

.head th.on {
    padding-top: 0;
    font-size: 10px;
    border-bottom: 2px solid #217346;
}

.corner i {
    display: block;
    width: 0;
    height: 0;
    margin-left: 11px;
    border: 4px solid transparent;
    border-right-color: #bbb;
    border-bottom-color: #bbb;
}

.grid td.merged {
    border-color: #fff;
}

.grid td.m-left {
    border-left-color: #d8d8d8;
    border-bottom: 1px solid #444;
}

.grid td.m-right {
    border-bottom-color: #e3e3e3;
    border-right-color: #e3e3e3;
}

.grid td.p0, .grid td.idx {
    padding-top: 1px;
    border: 1px solid #444;
    font-weight: bold;
    text-align: center;
    color: #222;
    font-size: 11px;
}

.grid td.p0 {
    border-left: 2px solid #217346;
}

.grid td.val, .grid td.val2 {
    padding-top: 1px;
    background: #c6c6c6;
    border: 1px solid #444;
    color: #444;
}

.grid td.val {
    padding-left: 9px;
    border-left: 2px solid #217346;
}

.grid td.val2 {
    padding-left: 9px;
    border-right: 2px solid #217346;
}

.grid td.first {
    border-top: 2px solid #217346;
}

.grid td.active {
    background: #fff;
}

.sheet-end {
    width: 3px;
    height: 227px;
    background: linear-gradient(#f1f1f1 13px, #fff 13px);
    border-right: 1px solid #dcdcdc;
}

.vscroll {
    width: 12px;
    margin-left: 2px;
    background: #d6d6d6;
}

.vscroll-btn {
    box-sizing: border-box;
    height: 13px;
    background: #fff;
    border: 1px solid #ababab;
    position: relative;
}

.vscroll-btn::after {
    content: "";
    position: absolute;
    left: 2px;
    top: 3px;
    border: 3px solid transparent;
    border-top: 0;
    border-bottom: 3px solid #555;
}

.vscroll-thumb {
    box-sizing: border-box;
    height: 30px;
    background: #fff;
    border: 1px solid #ababab;
}

/* mini toolbar over the sheet */
.minibar {
    position: absolute;
    left: 192px;
    top: 32px;
    box-sizing: border-box;
    width: 192px;
    height: 41px;
    padding: 2px 2px 0;
    background: #f8f8f8;
    border: 1px solid #dcdcdc;
}

.minibar .row {
    height: 18px;
}

.mini-row2 {
    margin-top: 1px;
    margin-left: -1px;
}

.mini-font { width: 50px; }
.mini-size { width: 31px; margin-right: 2px; border-left: 0; }
.mini-grow { margin: 0 4px 0 1px; }
.mini-shrink { margin-right: 4px; }
.mini-merge { margin-left: 2px; }
.mini-gap1 { margin-left: 1px; }
.mini-gap2 { margin-left: 2px; }

.minibar .tool-caret { width: 8px; }

/* context menu */
.menu {
    position: absolute;
    left: 192px;
    top: 84px;
    box-sizing: border-box;
    width: 131px;
    height: 143px;
    overflow: hidden;
    background: #fff;
    border: 1px solid #d0d0d0;
}

.item {
    display: flex;
    align-items: center;
    height: 17.500px;
    gap: 7px;
    padding-left: 4px;
    color: #555;
}

.item i {
    width: 12px;
}

.item-hover {
    background: #cfeee0;
}

.item-head {
    background: linear-gradient(90deg, #fff 18px, #ededed 18px);
    font-weight: 500;
}

.item-off {
    color: #b4b4b4;
}

.paste-row {
    height: 22px;
    padding-left: 22px;
}

.paste-big {
    width: 18px;
    height: 20px;
}

.menu-sep {
    height: 1px;
    margin: 0 0 0 23px;
    background: #e2e2e2;
}

/* watermark */
.watermark {
    position: absolute;
    left: 765px;
    top: 120px;
    width: 185px;
    height: 90px;
    color: rgba(255, 255, 255, 0.7);
    font-family: "Liberation Sans", sans-serif;
}

.watermark span {
    position: absolute;
    -webkit-text-stroke: 1px #ddd;
    white-space: nowrap;
    line-height: 1;
}

.wm-bai { left: 3px; top: 20px; font-size: 42px; }
.wm-paw { position: absolute; left: 63px; top: 0; width: 55px; height: 57px; }
.wm-du { left: 73px; top: 35px; font-size: 22px; letter-spacing: 2px; }
.wm-jy { left: 116px; top: 24px; font-size: 30px; font-family: "Noto Sans CJK SC", sans-serif; font-weight: bold; }
.wm-url { left: 2px; top: 62px; font-size: 22.500px; }
```
